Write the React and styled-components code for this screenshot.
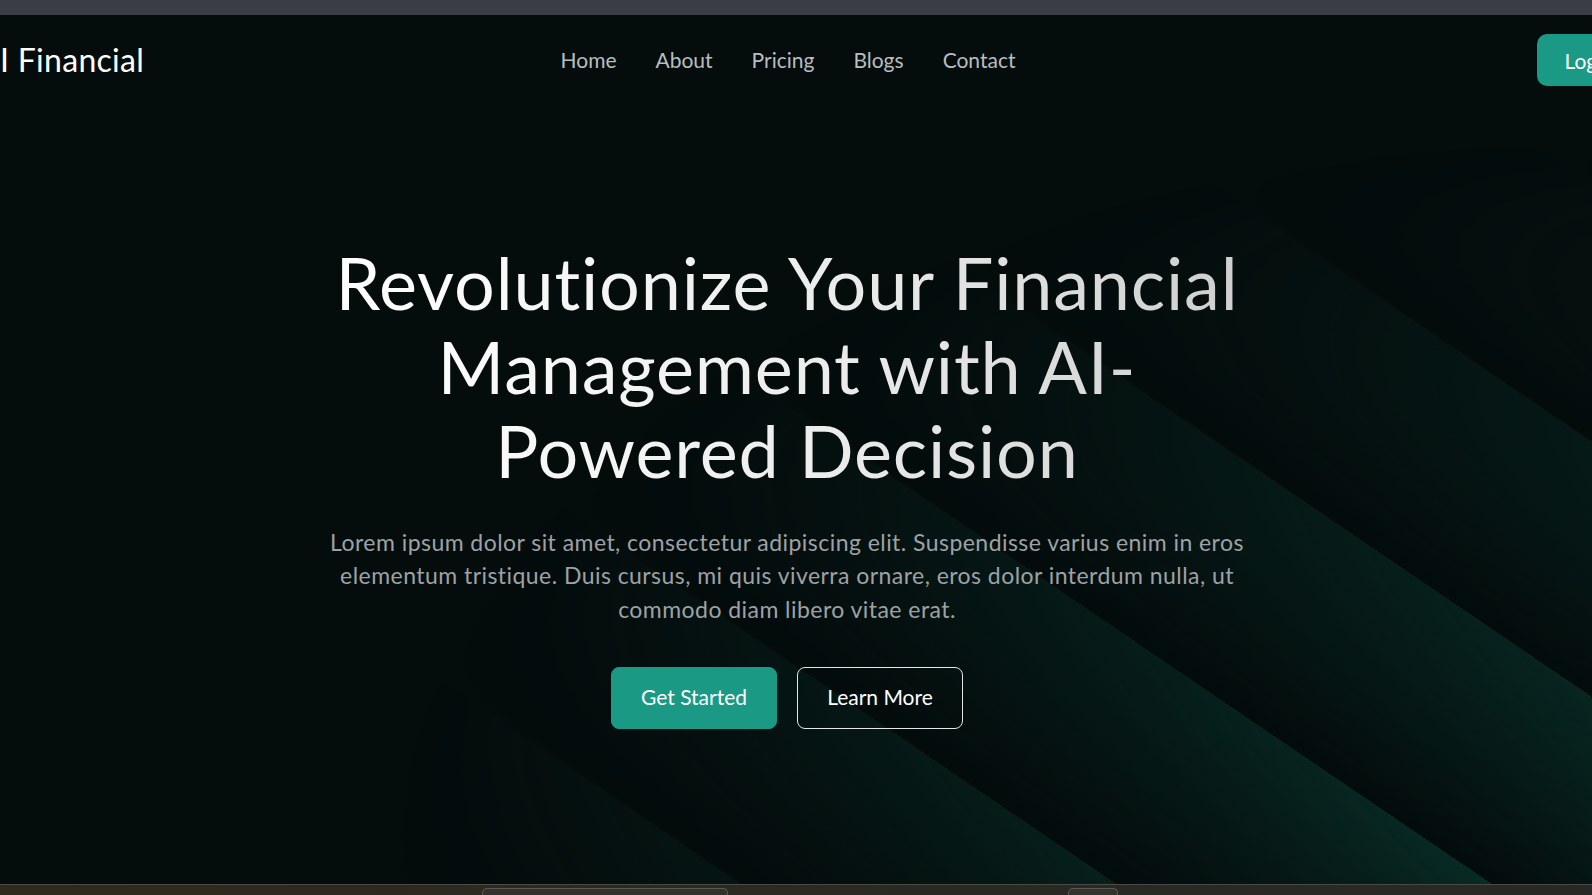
import React from "react";
import styled, { createGlobalStyle } from "styled-components";

const colors = {
  bg: "#040c0c",
  teal: "#1a9a85",
  nav: "#b9bdc0",
  text: "#9ea2a6",
};

const GlobalStyle = createGlobalStyle`
  html, body {
    margin: 0;
    padding: 0;
    overflow: hidden;
    background: ${colors.bg};
  }
  * {
    box-sizing: border-box;
  }
`;

const Screen = styled.div`
  display: flex;
  flex-direction: column;
  width: 1592px;
  height: 895px;
  overflow: hidden;
  font-family: Lato, "Noto Sans", sans-serif;
`;

const ChromeBar = styled.div`
  flex-shrink: 0;
  height: 15px;
  background: #3b3d46;
`;

// ribbons: period 211px across the stripes, edge at 142px from the top-right corner
const Page = styled.main`
  position: relative;
  flex: 1;
  display: flex;
  flex-direction: column;
  overflow: hidden;
  background: ${colors.bg};

  &::before {
    content: "";
    position: absolute;
    inset: 0;
    pointer-events: none;
    background: repeating-linear-gradient(
      214.2deg,
      rgba(9, 46, 39, 0.67) 0px,
      rgba(9, 46, 39, 0) 142px,
      rgba(9, 46, 39, 1) 142px,
      rgba(9, 46, 39, 0.67) 211px
    );
    -webkit-mask-image: radial-gradient(
      1200px 740px at 100% 100%,
      #000 0%,
      rgba(0, 0, 0, 0.5) 50%,
      transparent 100%
    );
    mask-image: radial-gradient(
      1200px 740px at 100% 100%,
      #000 0%,
      rgba(0, 0, 0, 0.5) 50%,
      transparent 100%
    );
  }
`;

const Header = styled.header`
  position: relative;
  z-index: 1;
  display: grid;
  grid-template-columns: 1fr auto 1fr;
  align-items: center;
  width: 1618px;
  height: 88px;
  margin-left: -22px;
`;

const Logo = styled.div`
  justify-self: start;
  color: #fff;
  font-size: 32px;
  font-weight: 400;
  letter-spacing: 0.3px;
  margin-top: 1px;
`;

const Nav = styled.nav`
  display: flex;
  gap: 39px;
  margin-left: 2px;
`;

const NavLink = styled.a`
  color: ${colors.nav};
  font-size: 21px;
  text-decoration: none;
  cursor: pointer;
`;

const LoginButton = styled.a`
  justify-self: end;
  display: flex;
  align-items: center;
  height: 52px;
  margin-top: 2px;
  margin-right: -45px;
  padding: 0 27px;
  border-radius: 10px;
  background: ${colors.teal};
  color: #fff;
  font-size: 21px;
  cursor: pointer;
`;

const Hero = styled.section`
  position: relative;
  z-index: 1;
  display: flex;
  flex-direction: column;
  align-items: center;
  padding-top: 137px;
  margin-left: -18px;
  text-align: center;
`;

const Title = styled.h1`
  margin: 0;
  font-size: 72px;
  font-weight: 400;
  letter-spacing: 0.8px;
  line-height: 84px;
  background: linear-gradient(90deg, #ffffff 0%, #ececec 55%, #cfcfcf 100%);
  -webkit-background-clip: text;
  background-clip: text;
  color: transparent;
`;

const Lead = styled.p`
  margin: 34px 0 0;
  color: ${colors.text};
  font-size: 23px;
  letter-spacing: 0.45px;
  line-height: 33.3px;
`;

const Actions = styled.div`
  display: flex;
  gap: 20px;
  margin-top: 41px;
`;

const Button = styled.a`
  display: flex;
  align-items: center;
  justify-content: center;
  width: 166px;
  height: 62px;
  padding-bottom: 3px;
  border-radius: 8px;
  border: 1px solid ${(p) => (p.$outline ? "#e6e6e6" : colors.teal)};
  background: ${(p) => (p.$outline ? "transparent" : colors.teal)};
  color: #fff;
  font-size: 21px;
  cursor: pointer;
`;

const TaskBar = styled.div`
  flex-shrink: 0;
  display: flex;
  align-items: flex-end;
  gap: 340px;
  height: 11px;
  padding-left: 482px;
  border-top: 1px solid #4a4944;
  background: linear-gradient(90deg, #2e2a1d 0%, #2b2a22 40%, #282826 100%);
`;

const TaskItem = styled.div`
  width: ${(p) => p.$w}px;
  height: 7px;
  border: 1px solid #5a5955;
  border-bottom: none;
  border-radius: 5px 5px 0 0;
  background: #33322d;
`;

const links = ["Home", "About", "Pricing", "Blogs", "Contact"];

export default function App() {
  return (
    <>
      <GlobalStyle />
      <Screen>
        <ChromeBar />
        <Page>
          <Header>
            <Logo>AI Financial</Logo>
            <Nav>
              {links.map((l) => (
                <NavLink key={l}>{l}</NavLink>
              ))}
            </Nav>
            <LoginButton>Login</LoginButton>
          </Header>

          <Hero>
            <Title>
              Revolutionize Your Financial
              <br />
              Management with AI-
              <br />
              Powered Decision
            </Title>
            <Lead>
              Lorem ipsum dolor sit amet, consectetur adipiscing elit. Suspendisse varius enim in eros
              <br />
              elementum tristique. Duis cursus, mi quis viverra ornare, eros dolor interdum nulla, ut
              <br />
              commodo diam libero vitae erat.
            </Lead>
            <Actions>
              <Button>Get Started</Button>
              <Button $outline>Learn More</Button>
            </Actions>
          </Hero>
        </Page>
        <TaskBar>
          <TaskItem $w={246} />
          <TaskItem $w={50} />
        </TaskBar>
      </Screen>
    </>
  );
}
